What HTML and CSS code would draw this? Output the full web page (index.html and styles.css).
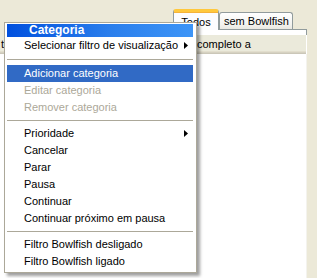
FILE: index.html
```html
<!DOCTYPE html>
<html lang="pt">
<head>
<meta charset="utf-8">
<title>Categoria</title>
<link rel="stylesheet" href="styles.css">
</head>
<body>
<div class="app">
  <div class="tabs">
    <div class="tab tab-active">Todos</div>
    <div class="tab">sem Bowlfish</div>
  </div>
  <div class="panel">
    <div class="page-edge"></div>
    <div class="header">
      <span class="col col-first">t</span>
      <span class="col col-second">completo a</span>
    </div>
    <div class="list"></div>
  </div>
</div>

<div class="menu">
  <div class="menu-title">Categoria</div>
  <div class="item">Selecionar filtro de visualização<svg class="arrow" width="4" height="7" viewBox="0 0 4 7"><path d="M0 0L4 3.5L0 7Z" fill="#000"/></svg></div>
  <div class="sep sep-wide"></div>
  <div class="item item-hot">Adicionar categoria</div>
  <div class="item item-disabled">Editar categoria</div>
  <div class="item item-disabled">Remover categoria</div>
  <div class="sep"></div>
  <div class="item">Prioridade<svg class="arrow" width="4" height="7" viewBox="0 0 4 7"><path d="M0 0L4 3.5L0 7Z" fill="#000"/></svg></div>
  <div class="item">Cancelar</div>
  <div class="item">Parar</div>
  <div class="item">Pausa</div>
  <div class="item">Continuar</div>
  <div class="item">Continuar próximo em pausa</div>
  <div class="sep"></div>
  <div class="item">Filtro Bowlfish desligado</div>
  <div class="item">Filtro Bowlfish ligado</div>
</div>
</body>
</html>
```

FILE: styles.css
```css
html, body {
  margin: 0;
  padding: 0;
  height: 100%;
  overflow: hidden;
}

body {
  background: #ECE9D8;
  font-family: "Liberation Sans", Arial, sans-serif;
  font-size: 11px;
  color: #000;
}

.app {
  padding-top: 9px;
  height: 100%;
  box-sizing: border-box;
  display: flex;
  flex-direction: column;
}

.tabs {
  display: flex;
  align-items: flex-end;
  padding-left: 173px;
  height: 20px;
  position: relative;
  z-index: 1;
}

.tab {
  box-sizing: border-box;
  height: 17px;
  padding: 2px 3px 0 4px;
  border: 1px solid #919B9C;
  border-bottom: none;
  border-radius: 3px 3px 0 0;
  background: linear-gradient(#FFFFFF, #F3F3EF 70%, #E9E8E1);
  line-height: 13px;
  white-space: nowrap;
}

.tab-active {
  height: 21px;
  margin-bottom: -1px;
  width: 46px;
  padding: 4px 0 0 0;
  text-align: center;
  background: #FCFCFE;
  border-top: 3px solid #FFC83C;
  box-shadow: inset 0 1px 0 #F5B23A;
}

.panel {
  flex: 1;
  margin-right: 10px;
  display: flex;
  flex-direction: column;
}

.page-edge {
  height: 5px;
  margin-left: 20px;
  border-top: 1px solid #919B9C;
  border-right: 1px solid #919B9C;
  background: #FFFFFF;
}

.header {
  height: 19px;
  display: flex;
  align-items: center;
  border-right: 1px solid #FFFFFF;
  background: linear-gradient(#EBEADB 0, #EBEADB 16px, #E2DECD 16px, #E2DECD 17px, #D6D2C2 17px, #D6D2C2 18px, #CBC7B8 18px);
  line-height: 16px;
}

.col {
  white-space: nowrap;
  padding-bottom: 2px;
}

.col-first {
  width: 4px;
  text-align: right;
}

.col-second {
  padding-left: 193px;
}

.list {
  flex: 1;
  background: #FFFFFF;
  border-right: 1px solid #F4F3EE;
}

.menu {
  position: absolute;
  left: 4px;
  top: 22px;
  width: 193px;
  box-sizing: border-box;
  border: 1px solid #ACA899;
  background: #FFFFFF;
  padding: 1px 3px 2px 2px;
  box-shadow: 3px 3px 3px rgba(0, 0, 0, 0.38);
  z-index: 5;
}

.menu-title {
  height: 13px;
  line-height: 13px;
  padding-left: 22px;
  background: linear-gradient(to right, #0050DE, #2A7EEC 55%, #3D95F7);
  color: #FFFFFF;
  font-weight: bold;
  font-size: 12px;
}

.item {
  height: 17px;
  padding: 0 5px 0 17px;
  display: flex;
  align-items: center;
  justify-content: space-between;
  white-space: nowrap;
  line-height: 17px;
}

.item-hot {
  background: #316AC5;
  color: #FFFFFF;
}

.item-disabled {
  color: #ACA899;
}

.arrow {
  display: block;
  flex: none;
}

.sep {
  height: 1px;
  margin: 4px 0;
  background: #ACA899;
}

.sep-wide {
  margin: 5px 0;
}
```
